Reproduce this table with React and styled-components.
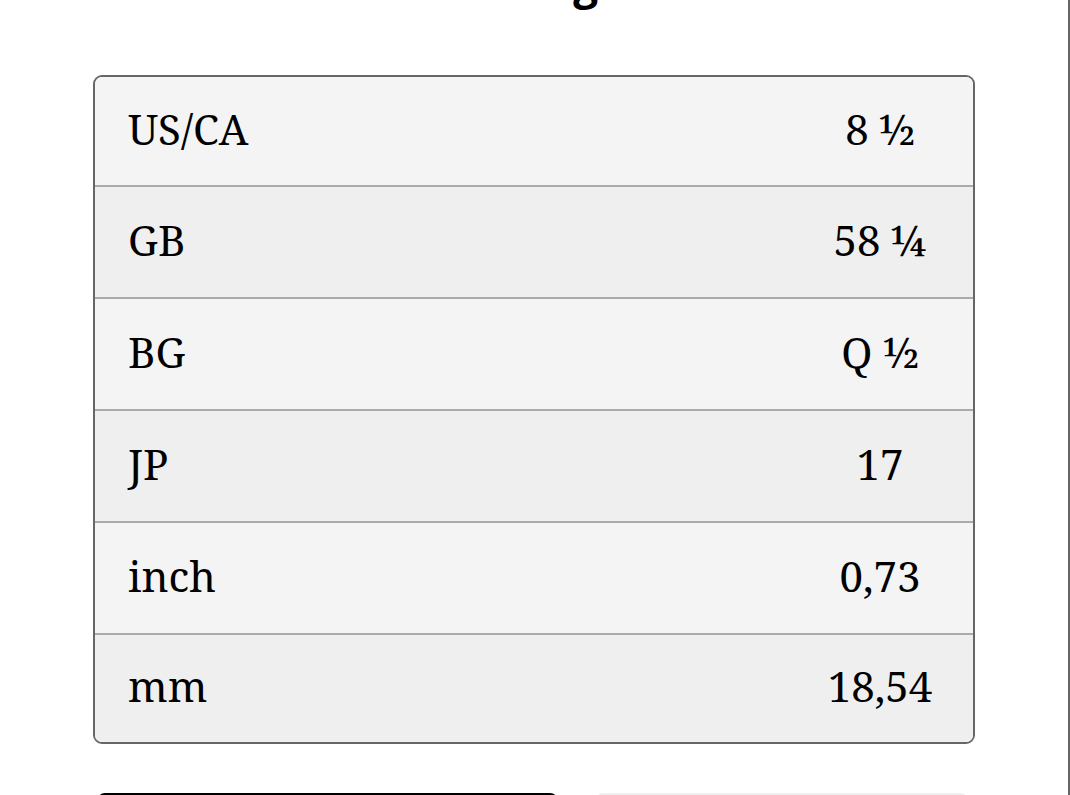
import React from 'react';
import styled, { createGlobalStyle } from 'styled-components';

const sizes = [
  { label: 'US/CA', value: '8 ½' },
  { label: 'GB', value: '58 ¼' },
  { label: 'BG', value: 'Q ½' },
  { label: 'JP', value: '17' },
  { label: 'inch', value: '0,73' },
  { label: 'mm', value: '18,54' },
];

export default function App() {
  return (
    <>
      <GlobalStyle />
      <Page>
        <Title>Sizing</Title>
        <SizeTable>
          {sizes.map((s, i) => (
            <Row key={s.label} $alt={i % 2 === 1}>
              <Label>{s.label}</Label>
              <Value>{s.value}</Value>
            </Row>
          ))}
        </SizeTable>
        <Actions>
          <PrimaryButton>Add to cart</PrimaryButton>
          <SecondaryButton>Size guide</SecondaryButton>
        </Actions>
      </Page>
    </>
  );
}

const GlobalStyle = createGlobalStyle`
  html, body {
    margin: 0;
    padding: 0;
    background: #fff;
    overflow: hidden;
  }
`;

const Page = styled.div`
  width: 1070px;
  height: 795px;
  border-right: 2px solid #666;
  overflow: hidden;
  display: flex;
  flex-direction: column;
  padding: 0 0 0 93px;
  box-sizing: border-box;
`;

const Title = styled.h1`
  flex-shrink: 0;
  margin: -48px 0 0 -93px;
  width: 1070px;
  height: 123px;
  text-align: center;
  font-family: 'Open Sans', sans-serif;
  font-weight: 700;
  font-size: 44px;
  line-height: 60px;
  color: #000;
`;

const SizeTable = styled.div`
  flex-shrink: 0;
  width: 882px;
  border: 2px solid #666;
  border-radius: 9px;
  overflow: hidden;
  box-sizing: border-box;
`;

const Row = styled.div`
  display: grid;
  grid-template-columns: 1fr 186px;
  align-items: center;
  height: 110px;
  background: ${({ $alt }) => ($alt ? '#efefef' : '#f4f4f4')};
  font-family: 'Noto Serif', 'DejaVu Serif', serif;
  font-size: 42px;
  color: #000;

  & + & {
    border-top: 2px solid #aaa;
  }

  &:first-child {
    height: 108px;
  }

  &:last-child {
    height: 107px;
  }
`;

const Label = styled.span`
  padding-left: 33px;
  padding-bottom: 6px;
`;

const Value = styled.span`
  text-align: center;
  padding-bottom: 6px;
`;

const Actions = styled.div`
  flex-shrink: 0;
  display: flex;
  gap: 37px;
  margin-top: 49px;
  padding: 0 7px 0 4px;
`;

const PrimaryButton = styled.button`
  flex: 0 0 461px;
  height: 60px;
  border: none;
  border-radius: 8px;
  background: #000;
  color: #fff;
  font-family: 'Open Sans', sans-serif;
  font-size: 20px;
`;

const SecondaryButton = styled.button`
  flex: 0 0 373px;
  height: 60px;
  border: none;
  border-radius: 8px;
  background: #efefef;
  color: #000;
  font-family: 'Open Sans', sans-serif;
  font-size: 20px;
`;
